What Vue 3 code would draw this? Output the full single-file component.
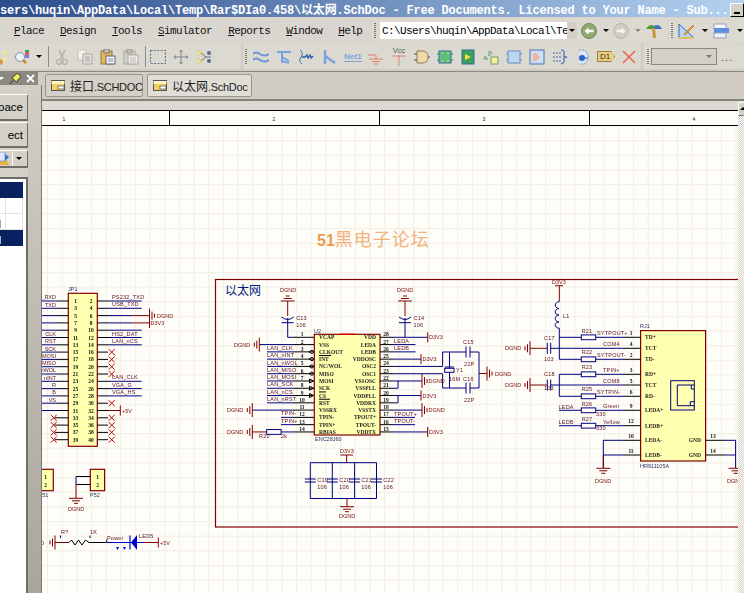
<script setup>
const NAVY = '#00007f', RED = '#800000', BLK = '#000000', BLUE = '#0000d8'
const segs = [], labels = [], boxes = [], res = [], nums = []
const seg = (d, c = NAVY) => segs.push({ d, c })
const txt = (x, y, s, k = 'net') => labels.push({ x, y, s, k })
const gnd = (x, y, dir) => {
  if (dir === 'l') seg(`M${x} ${y - 7}V${y + 7}M${x - 2.5} ${y - 4}V${y + 4}M${x - 5} ${y - 2}V${y + 2}`, RED)
  if (dir === 'r') seg(`M${x} ${y - 7}V${y + 7}M${x + 2.5} ${y - 4}V${y + 4}M${x + 5} ${y - 2}V${y + 2}`, RED)
  if (dir === 'd') seg(`M${x - 7} ${y}H${x + 7}M${x - 4} ${y + 2.5}H${x + 4}M${x - 2} ${y + 5}H${x + 2}`, RED)
  if (dir === 'u') seg(`M${x - 7} ${y}H${x + 7}M${x - 4} ${y - 2.5}H${x + 4}M${x - 2} ${y - 5}H${x + 2}`, RED)
}
const cross = (x, y) => seg(`M${x - 3} ${y - 3}L${x + 3} ${y + 3}M${x - 3} ${y + 3}L${x + 3} ${y - 3}`, '#c00000')
const resistor = (x, y, w = 14.4) => res.push({ x, y: y - 2.4, w })

// JP1 header
const jpY = i => 301 + 7.3 * i
const jpLeft = { 0: '_RXD', 1: 'TXD', 5: 'CLK', 6: 'RST', 7: 'SCK', 8: 'MOSI', 9: 'MISO', 10: 'nWOL', 11: 'nINT', 12: 'R', 13: 'B', 14: 'VS' }
const jpRight = { 0: 'PS232_TXD', 1: 'USB_TXD', 5: 'HS2_DAT', 6: 'LAN_nCS', 11: 'LAN_CLK', 12: 'VGA_G', 13: 'VGA_HS' }
for (let i = 0; i < 20; i++) {
  const y = jpY(i)
  nums.push({ x: 75.5, y: y + 2, s: 2 * i + 1 }, { x: 91, y: y + 2, s: 2 * i + 2 })
  if (i < 16) seg(`M36 ${y}H57`)
  else cross(53.7, y)
  seg(`M${i < 16 ? 57 : 55} ${y}H68.3M97.3 ${y}H108`, BLK)
  if (jpLeft[i]) txt(56, y - 1.6, jpLeft[i], 'end')
  const xr = (i >= 7 && i <= 10) || i === 14 || i >= 16
  if (xr) cross(111.7, y)
  else if (i === 15) seg(`M108 ${y}H120.3M120.3 ${y - 5}V${y + 5}`, RED)
  else if (i === 2) { seg(`M108 ${y}H132`); seg(`M132 ${y}H149.5`, RED); gnd(149.5, y, 'r') }
  else if (i === 3) { seg(`M108 ${y}H132`); seg(`M132 ${y}H149.5M149.5 ${y - 5}V${y + 5}`, RED) }
  else seg(`M108 ${y}H141.7`)
  if (jpRight[i]) txt(112, y - 2, jpRight[i])
}
txt(157, jpY(2) + 2, 'DGND', 'pow'); txt(150.5, jpY(3) + 2, 'D3V3', 'pow'); txt(122, jpY(15) + 2, '+5V', 'pow')
txt(68, 291, 'JP1', 'ref')

// U2
const uY = i => 337.3 + 7.28 * i
const uL = ['VCAP', 'VSS', 'CLKOUT', 'INT', 'NC/WOL', 'MISO', 'MOSI', 'SCK', 'CS', 'RST', 'VSSRX', 'TPIN-', 'TPIN+', 'RBIAS']
const uR = ['VDD', 'LEDA', 'LEDB', 'VDDOSC', 'OSC2', 'OSC1', 'VSSOSC', 'VSSPLL', 'VDDPLL', 'VDDRX', 'VSSTX', 'TPOUT+', 'TPOUT-', 'VDDTX']
const uNet = ['LAN_CLK', 'LAN_nINT', 'LAN_nWOL', 'LAN_MISO', 'LAN_MOSI', 'LAN_SCK', 'LAN_nCS', 'LAN_nRST']
uL.forEach((n, i) => {
  const y = uY(i)
  txt(319, y + 2, n, 'pin')
  txt(376, y + 2, uR[i], 'pinEnd')
  txt(302, y - 1, String(i + 1), 'num')
  txt(386, y - 1, String(28 - i), 'num')
  seg(`M293 ${y}H314M380 ${y}H393`, BLK)
  if (i >= 2 && i <= 9) { seg(`M267 ${y}H293`); txt(267, y - 1.8, uNet[i - 2]) }
  if (i >= 2 && i <= 5) seg(`M309 ${y}L312 ${y - 1.8}L314 ${y}L312 ${y + 1.8}Z`, BLK)
  if (i >= 6 && i <= 8) seg(`M309.5 ${y - 2}L313.5 ${y}L309.5 ${y + 2}Z`, BLK)
})
seg(`M319 ${uY(3) - 3.6}H331M319 ${uY(8) - 3.6}H326M319 ${uY(9) - 3.6}H330`, BLK)
txt(314, 333, 'U2', 'ref'); txt(315, 441, 'ENC28J60', 'ref')
seg(`M287.7 323V${uY(0)}H293`)
seg(`M287.7 301V316M405 301V316`, RED)
gnd(287.7, 301, 'u'); gnd(405, 301, 'u')
txt(280, 292, 'DGND', 'pow'); txt(397, 292, 'DGND', 'pow')
;[287.7, 405].forEach((x, i) => {
  seg(`M${x - 6} 317Q${x} 322 ${x + 6} 317M${x - 6} 322.7H${x + 6}M${x} 318V323`)
  txt(x + 8.5, 320, i ? 'C14' : 'C13'); txt(x + 8.5, 327, '106')
})
seg(`M393 ${uY(0)}H427.7M405 323V${uY(0)}`)
seg(`M427.7 ${uY(0) - 5}V${uY(0) + 5}`, RED)
txt(429, uY(0) + 2, 'D3V3', 'pow')
seg(`M259.3 ${uY(1)}H293`); gnd(259.3, uY(1), 'l'); txt(234, uY(1) + 2, 'DGND', 'pow')
seg(`M252.3 ${uY(10)}H293`); gnd(252.3, uY(10), 'l'); txt(227, uY(10) + 2, 'DGND', 'pow')
seg(`M252.3 ${uY(13)}H266.7`, RED); gnd(252.3, uY(13), 'l'); txt(227, uY(13) + 2, 'DGND', 'pow')
resistor(266.7, uY(13)); seg(`M281 ${uY(13)}H293`)
txt(259, 438, 'R20'); txt(281, 438, '2k')
seg(`M281 ${uY(11)}H293M281 ${uY(12)}H293`); txt(281, 415, 'TPIN-'); txt(281, 422.5, 'TPIN+')
seg(`M393 ${uY(1)}H415.5M393 ${uY(2)}H415.5`); txt(394, uY(1) - 1.5, 'LEDA'); txt(394, uY(2) - 1.5, 'LEDB')
seg(`M393 ${uY(3)}H421`); seg(`M421 ${uY(3) - 5}V${uY(3) + 5}`, RED); txt(422.5, uY(3) + 2, 'D3V3', 'pow')
seg(`M393 ${uY(4)}H442.6V352H466M393 ${uY(5)}H442.6V388H466`)
seg(`M393 ${uY(6)}H422M393 ${uY(7)}H398V${uY(6)}`); gnd(422, uY(6), 'r'); txt(428.5, uY(6) + 2, 'DGND', 'pow')
seg(`M393 ${uY(8)}H421M393 ${uY(9)}H398V${uY(8)}`); seg(`M421 ${uY(8) - 5}V${uY(8) + 5}`, RED); txt(422.5, uY(8) + 2, 'D3V3', 'pow')
seg(`M393 ${uY(10)}H422`); gnd(422, uY(10), 'r'); txt(428.5, uY(10) + 2, 'DGND', 'pow')
seg(`M393 ${uY(11)}H415M393 ${uY(12)}H415`); txt(394, uY(11) - 1.5, 'TPOUT+'); txt(394, uY(12) - 1.5, 'TPOUT-')
seg(`M393 ${uY(13)}H427.7`); seg(`M427.7 ${uY(13) - 5}V${uY(13) + 5}`, RED); txt(429, uY(13) + 2, 'D3V3', 'pow')

// crystal
seg('M466 346.5V357.5M470 346.5V357.5M470 352H479V388H470M466 382.5V393.5M470 382.5V393.5M449.5 352V388M444.7 367H454')
seg('M479 373.5H487', RED); gnd(487, 373.5, 'r'); txt(495, 375.5, 'DGND', 'pow')
txt(463, 344, 'C15'); txt(464, 366, '22P'); txt(463, 381, 'C16'); txt(464, 402, '22P'); txt(456, 371.5, 'Y1'); txt(449, 380.5, '16M')

// RJ1 side
txt(552, 284, 'D3V3', 'pow')
seg('M555 285.7H563M559.3 286V301.7', RED)
seg('M559.3 301.7C554 302 554 308 559 308.5C554 309 554 315 559 315C554 315.5 554 321.5 559 322C554 322 554 328 559.3 328.3V359.3H581M559.3 337.3H581M559.3 374.3V396.3H581M559.3 374.3H581')
txt(563, 317.5, 'L1')
const rows = [
  { y: 337.3, r: 'R21', ry: 332.5, n: 'SYTPOUT+', nx: 597, pin: '1', name: 'TD+' },
  { y: 348.3, c: 1, n: 'COM4', nx: 603, pin: '4', name: 'TCT' },
  { y: 359.3, r: 'R22', ry: 353.5, n: 'SYTPOUT-', nx: 597, pin: '2', name: 'TD-' },
  { y: 374.3, r: 'R23', ry: 369, n: 'TPIN+', nx: 603, pin: '3', name: 'RD+' },
  { y: 385, c: 1, n: 'COM8', nx: 603, pin: '5', name: 'TCT' },
  { y: 396.3, r: 'R25', ry: 391, n: 'SYTPIN-', nx: 597, pin: '6', name: 'RD-' },
  { y: 410.3, r: 'R26', ry: 405.5, n: 'Green', nx: 603, pin: '9', name: 'LEDA+' },
  { y: 425.7, r: 'R27', ry: 420.5, n: 'Yellow', nx: 603, pin: '12', name: 'LEDB+' },
  { y: 440.3, pin: '10', name: 'LEDA-' },
  { y: 455, pin: '11', name: 'LEDB-' }
]
rows.forEach(o => {
  seg(`M623 ${o.y}H640.6`, BLK)
  txt(645, o.y + 2, o.name, 'pin')
  txt(631, o.y - 2.5, o.pin, 'num')
  if (o.r) { resistor(581.3, o.y); seg(`M595.7 ${o.y}H623`); txt(581.7, o.ry, o.r) }
  if (o.c) {
    seg(`M550.7 ${o.y}H623M547.3 ${o.y - 5.5}V${o.y + 5.5}M550.7 ${o.y - 5.5}V${o.y + 5.5}`)
    seg(`M530 ${o.y}H547`, RED); gnd(530, o.y, 'l'); txt(505, o.y + 2, 'DGND', 'pow')
  }
  if (o.n) txt(o.nx, o.y - 2, o.n)
  if (!o.r && !o.c) seg(`M603.3 ${o.y}H623`)
})
txt(544, 340, 'C17'); txt(544, 361, '103'); txt(544, 376, 'C18'); txt(544, 390, '103')
seg('M559 410.3H581M559 425.7H581'); txt(558.5, 408.5, 'LEDA'); txt(558.5, 423.5, 'LEDB')
txt(596, 416, '330'); txt(596, 430, '330')
seg('M603.3 440.3V468')
seg('M603.3 455V468', RED); gnd(603.3, 468.3, 'd'); txt(595, 483, 'DGND', 'pow')
seg('M705.6 440.3H725M705.6 455H725', BLK)
seg('M725 440.3H735.6V468M725 455H735.6')
gnd(735.6, 468.3, 'd'); txt(727, 483, 'DGND', 'pow')
txt(713, 438, '13', 'num'); txt(713, 453, '14', 'num')
txt(701, 442.3, 'GND', 'pinEnd'); txt(701, 457, 'GND', 'pinEnd')
txt(640, 328, 'RJ1', 'ref'); txt(640, 467.5, 'HR911105A', 'ref')

// capacitor bank
seg('M310.3 462.7H376.5V498.5H310.3ZM332.3 462.7V498.5M354.6 462.7V498.5')
;[[310.3, 'C19', 317.3], [332.3, 'C20', 339.3], [354.6, 'C21', 361.3], [376.5, 'C22', 383.3]].forEach(([x, n, tx]) => {
  seg(`M${x - 5.5} 479H${x + 5.5}M${x - 5.5} 482H${x + 5.5}`)
  txt(tx, 481.5, n); txt(tx, 489, '106')
})
txt(340, 452.5, 'D3V3', 'pow')
seg('M340.5 455H353M346.7 455V462.7M347 498.5V506.7', RED)
gnd(347, 506.7, 'd'); txt(339, 518, 'DGND', 'pow')

// P51 / P52
seg('M76 476.5H90.3M76 484.5H90.3', BLK)
seg('M76 476.5V484.5', NAVY)
seg('M76 484.5V498', RED); gnd(76, 498.3, 'd'); txt(68, 511, 'DGND', 'pow')
boxes.push({ x: 36, y: 469.3, w: 17.3, h: 21.4 }, { x: 90.3, y: 469.3, w: 14.3, h: 21.4 })
nums.push({ x: 45.5, y: 479, s: 1 }, { x: 45.5, y: 486.5, s: 2 }, { x: 97.5, y: 479, s: 1 }, { x: 97.5, y: 486.5, s: 2 })
txt(38.5, 497, 'P51', 'ref'); txt(90, 497, 'P52', 'ref')

// power LED row
seg('M55 542.5H69', RED); gnd(55, 542.5, 'l'); txt(28, 544.5, 'DGND', 'pow')
seg('M69 542.5l2.5 -2.5 3.5 5 3.5 -5 3.5 5 3.5 -5 3.5 2.5H106.7', BLK)
seg('M60.5 535.5V538M90 535.5V538M106.7 539.5V542.5')
seg('M106.7 542.5H143', BLUE)
seg('M143 542.5H158.3M158.3 537.5V547.5', RED)
txt(61, 533.5, 'R?'); txt(90, 533.5, '1K'); txt(107, 540, 'Power'); txt(139, 537.5, 'LED5'); txt(160, 544.5, '+5V', 'pow')
const gridLines = [169.5, 379.5, 589.5]
const rulerNums = [[64, 1], [274, 2], [484, 3], [694, 4]]
</script>

<template>
  <div class="win">
    <header class="title">
      <span class="title-text">sers\huqin\AppData\Local\Temp\Rar$DIa0.458\以太网.SchDoc - Free Documents. Licensed to Your Name - Sub...</span>
      <button class="min"></button>
    </header>

    <div class="menubar">
      <nav class="menus">
        <span><u>P</u>lace</span><span><u>D</u>esign</span><span><u>T</u>ools</span><span><u>S</u>imulator</span><span><u>R</u>eports</span><span><u>W</u>indow</span><span><u>H</u>elp</span>
      </nav>
      <div class="grp g-path">
        <i class="grip"></i>
        <div class="pathbox"><span class="pathtext">C:\Users\huqin\AppData\Local\Te</span><b class="drop"><i class="caret"></i></b></div>
        <svg class="round" viewBox="0 0 16 16"><circle cx="8" cy="8" r="7.5" fill="#8eaa72" stroke="#6f8c58"/><path d="M3.5 8l4-3.6v2.3h5v2.6h-5v2.3z" fill="#fff"/></svg>
        <i class="caret c1"></i>
        <svg class="round" viewBox="0 0 16 16"><circle cx="8" cy="8" r="7.5" fill="#cfccc6" stroke="#b9b6b0"/><path d="M12.5 8l-4-3.6v2.3h-5v2.6h5v2.3z" fill="#f4f3f0"/></svg>
        <i class="caret c2"></i>
        <svg class="tree" viewBox="0 0 18 16"><path d="M1 6Q5 0 9 3L9 6Z" fill="#4f9a3c"/><path d="M9 3Q14 0 17 6L9 6Z" fill="#3a72c4"/><path d="M7 5h3l1 10H8z" fill="#c8963c"/></svg>
      </div>
      <div class="grp g-tools">
        <i class="grip"></i>
        <svg class="ic wide" viewBox="0 0 17 16"><path d="M1 1v14h15z" fill="#b8d4f0" stroke="#3a6bb0"/><path d="M1 14h15v2H1z" fill="#e0c060"/><path d="M7 10l8-8 1 1-8 8-2 1z" fill="#e6a030" stroke="#a06010" stroke-width=".5"/></svg>
        <i class="caret c3"></i>
        <svg class="ic wide" viewBox="0 0 17 16"><rect x="1" y="1" width="12" height="5" fill="#f4f6fb" stroke="#8fa0b8"/><rect x="1" y="5" width="15" height="5" fill="#5f8ede"/><rect x="1" y="10" width="12" height="5" fill="#eef0f6" stroke="#8fa0b8"/></svg>
        <i class="caret c4"></i>
      </div>
    </div>

    <div class="toolbar">
      <div class="grp g1">
        <svg class="part" viewBox="0 0 10 16"><circle cx="5" cy="4" r="2" fill="#f3e88a"/><circle cx="5" cy="10" r="2" fill="#f3e88a"/><circle cx="0" cy="13" r="3" fill="#d89a4a"/></svg>
        <svg class="ic s1" viewBox="0 0 16 16"><circle cx="6" cy="8" r="4.5" fill="#e8f0f8" stroke="#7f93a8"/><path d="M9 11l3 3" stroke="#c88a3a" stroke-width="2.5"/><path d="M11 1h4v2h-4z" fill="#4aa04a"/><path d="M11 3h4v3h-4z" fill="#d86060"/><path d="M11 6h4v3h-4z" fill="#7a7ae0"/></svg>
        <i class="caret c5"></i>
        <i class="sep s2"></i>
        <span class="slot s3"><svg class="ic" viewBox="0 0 16 16"><path d="M5 1l5 10M11 1L6 11" stroke="#b3b1ac" stroke-width="1.6" fill="none"/><circle cx="5" cy="13" r="2.4" fill="none" stroke="#b3b1ac" stroke-width="1.4"/><circle cx="11" cy="13" r="2.4" fill="none" stroke="#b3b1ac" stroke-width="1.4"/></svg></span>
        <span class="slot"><svg class="ic" viewBox="0 0 16 16"><rect x="1" y="1" width="8" height="10" fill="#f2f1ee" stroke="#c4c2bd"/><rect x="6" y="5" width="9" height="10" fill="#e3e1dc" stroke="#a8a6a1"/><path d="M8 8h5M8 10h5M8 12h5" stroke="#a8a6a1"/></svg></span>
        <span class="slot"><svg class="ic" viewBox="0 0 16 16"><rect x="1" y="2" width="11" height="13" fill="#e3b65c" stroke="#8f7a3f"/><rect x="4" y="0" width="5" height="4" fill="#c9c7c2" stroke="#777"/><rect x="6" y="7" width="9" height="8" fill="#eef0f4" stroke="#667"/><path d="M8 10h5M8 12h5" stroke="#8899aa"/></svg></span>
        <span class="slot"><svg class="ic" viewBox="0 0 16 16"><rect x="1" y="2" width="11" height="13" fill="#d0cec8" stroke="#aaa8a2"/><rect x="4" y="0" width="5" height="4" fill="#bfbdb8" stroke="#999"/><rect x="5" y="6" width="10" height="9" fill="#eeece8" stroke="#aaa8a2"/><path d="M7 9h6M7 11h6M7 13h6" stroke="#bbb"/></svg></span>
        <i class="sep s4"></i>
        <span class="slot s5"><svg class="ic" viewBox="0 0 16 16"><rect x=".5" y="1.5" width="15" height="13" fill="none" stroke="#5d7290" stroke-width="1.2" stroke-dasharray="2 1.4"/></svg></span>
        <span class="slot"><svg class="ic" viewBox="0 0 16 16"><path d="M8 1v14M1 8h14M6.5 3L8 1l1.500 2M6.500 13L8 15l1.500-2M3 6.500L1 8l2 1.500M13 6.500L15 8l-2 1.500" stroke="#7d8590" fill="none"/></svg></span>
        <span class="slot"><svg class="ic" viewBox="0 0 16 16"><path d="M5 4l5 4-5 4M10 8h5" stroke="#6c7480" fill="none"/><circle cx="3" cy="4" r="2.200" fill="#f0e68c" stroke="#c8b860" stroke-width=".5"/><circle cx="3" cy="12" r="2.200" fill="#f0e68c" stroke="#c8b860" stroke-width=".5"/><circle cx="13" cy="4" r="2" fill="#5d6c88"/><circle cx="13" cy="12" r="2" fill="#5d6c88"/></svg></span>
      </div>

      <div class="grp g2">
        <i class="grip"></i>
        <span class="slot"><svg class="ic" viewBox="0 0 16 16"><path d="M0 5q3-3 7 0t9 0M0 11q3-3 7 0t9 0" stroke="#6a96d8" stroke-width="2" fill="none"/></svg></span>
        <span class="slot"><svg class="ic" viewBox="0 0 16 16"><path d="M1 3h14M6 3v11M6 8l7 4M6 12l7 2" stroke="#7aa2dc" stroke-width="2" fill="none"/></svg></span>
        <span class="slot"><svg class="ic" viewBox="0 0 16 16"><path d="M1 1q4 3 1 7t1 7" stroke="#3a6fc0" fill="none"/><path d="M3 8h3l2-2 1 3 2-3 1 3 2-2" stroke="#2a5ab0" stroke-width="1.300" fill="none"/></svg></span>
        <span class="slot"><svg class="ic" viewBox="0 0 16 16"><path d="M3 1v14M3 7l10 7" stroke="#7aa2dc" stroke-width="2.400" fill="none"/></svg></span>
        <span class="slot"><span class="neticon">Net1</span></span>
        <span class="slot"><svg class="ic" viewBox="0 0 16 16"><path d="M0 6h8v4M1 10h14M4 12.500h8M6 15h4" stroke="#e08070" fill="none"/></svg></span>
        <span class="slot"><svg class="ic tall" viewBox="0 0 16 20"><path d="M1 9h14M8 9v10" stroke="#e08070" fill="none"/><text x="8" y="6" class="vcc">Vcc</text></svg></span>
        <span class="slot"><svg class="ic" viewBox="0 0 16 16"><path d="M3 2h5q6 0 6 6t-6 6H3z" fill="#f2d9a8" stroke="#8a7a5a"/><path d="M0 5h3M0 11h3M14 8h2" stroke="#555"/></svg></span>
        <span class="slot"><svg class="ic" viewBox="0 0 16 16"><rect x="2" y="2" width="12" height="12" fill="#5cc07c" stroke="#3a6aa0"/><path d="M4 4h2M10 4h2M4 12h2M10 12h2" stroke="#f0e060"/><path d="M0 5h2M0 11h2M14 5h2M14 11h2" stroke="#3a6aa0"/></svg></span>
        <span class="slot"><svg class="ic" viewBox="0 0 16 16"><rect x="2" y="1" width="12" height="14" fill="#3aa060" stroke="#3a6aa0"/><path d="M5 5l6 3-6 3z" fill="#f6e040"/></svg></span>
        <span class="slot"><svg class="ic" viewBox="0 0 16 16"><path d="M6 2l3 2-3 3zM2 7l3 3H1zM9 9h5v5H9z" fill="#cfe4c0" stroke="#6aa070"/><rect x="8" y="8" width="7" height="7" fill="#f4f09a" stroke="#6aa070"/></svg></span>
        <span class="slot"><svg class="ic" viewBox="0 0 16 16"><rect x="2" y="2" width="12" height="12" fill="#b8d8f2" stroke="#6a8ac0"/><path d="M0 5h2M0 11h2M14 5h2M14 11h2" stroke="#6a8ac0"/></svg></span>
        <span class="slot"><svg class="ic" viewBox="0 0 16 16"><rect x="1" y="1" width="14" height="14" fill="#cfdff2" stroke="#4a72b0"/><path d="M4 4h3l4 4-4 4H4z" fill="#f4b0a0"/></svg></span>
        <span class="slot"><svg class="ic" viewBox="0 0 16 16"><path d="M9 1q4 0 3 4t3 3q-4 0-3 3t-3 4" stroke="#3a6ab8" stroke-width="1.200" fill="none"/><path d="M1 4h8M1 8h8M1 12h8" stroke="#3a6ab8" stroke-dasharray="2 1"/></svg></span>
        <span class="slot"><svg class="ic" viewBox="0 0 16 16"><path d="M4 1h6l4 7-4 7H4" fill="#dbe7f6" stroke="#7a9ad0" stroke-dasharray="2 1"/><circle cx="7" cy="9" r="3" fill="#2a62c8"/><path d="M10 9h3" stroke="#2a62c8"/></svg></span>
        <span class="slot"><span class="d1">D1</span></span>
        <span class="slot"><svg class="ic" viewBox="0 0 16 16"><path d="M2 2l12 12M14 2L2 14" stroke="#e8674c" stroke-width="1.500"/></svg></span>
      </div>

      <div class="grp g3">
        <i class="grip"></i>
        <div class="combo"><i class="caret c6"></i></div>
        <span class="ell">...</span>
      </div>
    </div>

    <div class="body">
      <aside class="side">
        <div class="phead">
          <i class="caret c7"></i>
          <svg class="pinic" viewBox="0 0 12 12"><path d="M8 0l4 4-3 3-2 3-5-5 3-2z" fill="#f3ef5c" stroke="#222"/><path d="M3 8L0 12" stroke="#222"/></svg>
          <svg class="close" viewBox="0 0 9 9"><path d="M1 1l7 7M8 1L1 8" stroke="#fff" stroke-width="1.800"/></svg>
        </div>
        <div class="siderow">
          <div class="panel">
            <button class="pbtn b1">pace</button>
            <button class="pbtn b2">ect</button>
            <button class="pbtn b3">
              <svg class="fileic" viewBox="0 0 13 14"><path d="M0 8h11l2 5H0z" fill="#e8b040"/><rect x="1" y="0" width="8" height="9" fill="#dfe8f8" stroke="#8aa4cc"/><path d="M9 2l4 3-4 4z" fill="#2f70d8"/></svg>
              <i class="bsep"></i><i class="caret c8"></i>
            </button>
            <div class="listbox">
              <div class="navy"></div>
              <div class="cells"><i></i><i></i></div>
              <div class="cells"><i><b class="mark"></b></i><i></i></div>
              <div class="navy"><b class="mark m2"></b></div>
            </div>
          </div>
          <div class="gutter"></div>
        </div>
      </aside>

      <main class="work">
        <div class="tabs">
          <div class="tab">
            <svg class="docic" viewBox="0 0 14 11"><rect x=".5" y=".5" width="13" height="10" fill="#f2d060" stroke="#555"/><path d="M.5 1h13v3H.5z" fill="#fbf3c0"/><rect x="7" y="6" width="6" height="3" fill="#fff" stroke="#555" stroke-width=".7"/></svg>
            <span class="tabt"><span class="cj">接口</span>.SCHDOC</span>
          </div>
          <div class="tab on">
            <svg class="docic" viewBox="0 0 14 11"><rect x=".5" y=".5" width="13" height="10" fill="#f2d060" stroke="#555"/><path d="M.5 1h13v3H.5z" fill="#fbf3c0"/><rect x="7" y="6" width="6" height="3" fill="#fff" stroke="#555" stroke-width=".7"/></svg>
            <span class="tabt"><span class="cj">以太网</span>.SchDoc</span>
          </div>
        </div>
        <div class="band"></div>
        <div class="sheetrow">
          <svg class="sheet" viewBox="42 110 696 483" preserveAspectRatio="xMinYMin slice">
            <defs>
              <pattern id="grid" x="47" y="125.400" width="14.650" height="14.650" patternUnits="userSpaceOnUse">
                <path d="M0 0V14.650M0 0H14.650" stroke="#f2efe8" stroke-width="2.400" fill="none"/>
              </pattern>
            </defs>
            <rect x="42" y="110" width="696" height="483" fill="#fffdf8"/>
            <rect x="42" y="126" width="696" height="467" fill="url(#grid)"/>
            <path d="M42 110.500H738M42 125.500H738" stroke="#000"/>
            <path v-for="x in gridLines" :key="x" :d="`M${x} 110V125`" stroke="#000"/>
            <text v-for="[x, n] in rulerNums" :key="n" :x="x" y="120.500" class="ruler">{{ n }}</text>

            <rect x="215.500" y="279.500" width="540" height="247.500" fill="none" stroke="#800000" stroke-width="1.200"/>
            <text x="225" y="295" class="big">以太网</text>
            <text x="317" y="246" class="logo"><tspan class="logo51">51</tspan>黑电子论坛</text>

            <rect x="68.300" y="293.300" width="29" height="153" class="part-box"/>
            <rect x="314.300" y="334.300" width="65.700" height="100.700" class="part-box"/>
            <rect x="640.600" y="330.600" width="65" height="130.400" class="part-box"/>
            <rect v-for="(b, i) in boxes" :key="i" :x="b.x" :y="b.y" :width="b.w" :height="b.h" class="part-box"/>
            <path d="M340 334.300H355" stroke="#e00000" stroke-width="1.400"/>

            <rect x="670.700" y="380.700" width="23.600" height="29.300" fill="none" stroke="#00007f"/>
            <path d="M694.300 385H677.300V405.700H694.300M691.300 385V389H694.300M690.300 405.700V401.700H694.300" fill="none" stroke="#00007f"/>

            <path v-for="(s, i) in segs" :key="i" :d="s.d" :stroke="s.c" fill="none" stroke-width="1"/>
            <rect v-for="(r, i) in res" :key="'r' + i" :x="r.x" :y="r.y" :width="r.w" height="4.800" fill="#fffdf8" stroke="#00007f"/>
            <rect x="444.700" y="368.300" width="9.300" height="4" fill="#fffdf8" stroke="#00007f"/>
            <path d="M131 542.500L137 535V550Z" fill="#0000d8"/>
            <path d="M130 535.500V549.500" stroke="#0000d8" stroke-width="1.200"/>
            <path d="M116 547l3 0-1.500 3zM123 547l3 0-1.500 3z" fill="#0000d8"/>

            <g class="soft">
              <text v-for="(n, i) in nums" :key="'n' + i" :x="n.x" :y="n.y" class="t num">{{ n.s }}</text>
              <text v-for="(l, i) in labels" :key="'l' + i" :x="l.x" :y="l.y" :class="['t', l.k]">{{ l.s }}</text>
            </g>
          </svg>
          <div class="vscroll"><button class="sbtn"><i class="up"></i></button></div>
        </div>
      </main>
    </div>
  </div>
</template>

<style>
html, body { margin: 0; background: #d4d0c8; }
</style>

<style scoped>
.win { width: 744px; height: 593px; display: flex; flex-direction: column; overflow: hidden; background: #d4d0c8; font-family: "Liberation Sans", "Noto Sans CJK SC", sans-serif; }
.title { flex: none; height: 17px; display: flex; align-items: center; background: linear-gradient(90deg, #2c4c8c, #b4d2f0); }
.title-text { flex: 1; min-width: 0; white-space: nowrap; overflow: hidden; color: #fff; font: bold 12px "Liberation Mono", "Noto Sans CJK SC", monospace; letter-spacing: -.2px; }
.min { flex: none; width: 14px; height: 14px; padding: 0; margin-top: 3px; background: #d4d0c8; border: 1px solid; border-color: #fff #000 #000 #fff; position: relative; }
.min::after { content: ""; position: absolute; left: 3px; bottom: 2px; width: 6px; height: 2px; background: #000; }

.menubar { flex: none; height: 27px; display: flex; align-items: center; background: #d9d6cf; }
.menus { display: flex; gap: 16px; padding-left: 14px; font: 11px "Liberation Mono", monospace; letter-spacing: -.6px; color: #111; }
.grp { background: #dcd9d1; border-radius: 3px; display: flex; align-items: center; }
.g-path { margin-left: auto; width: 295px; height: 23px; }
.g-tools { margin-left: 2px; width: 75px; height: 23px; }
.grip { flex: none; width: 2px; height: 15px; margin-left: 2px; background: repeating-linear-gradient(#777 0 1px, transparent 1px 2px); }
.pathbox { width: 197px; height: 17px; margin-left: 4px; background: #fff; display: flex; align-items: center; justify-content: space-between; }
.pathtext { font: 11px "Liberation Mono", monospace; letter-spacing: -.6px; color: #000; padding-left: 2px; white-space: nowrap; overflow: hidden; }
.drop { width: 10px; height: 17px; background: #d4d0c8; display: flex; align-items: center; justify-content: center; }
.caret { display: block; width: 0; height: 0; flex: none; border: 3px solid transparent; border-top: 3px solid #000; border-bottom: 0; }
.round { width: 16px; height: 16px; flex: none; margin-left: 4px; }
.c1 { margin-left: 6px; }
.round + .c2 { margin-left: 6px; border-top-color: #888; }
.tree { width: 18px; height: 16px; flex: none; margin-left: 4px; }
.ic { width: 16px; height: 16px; flex: none; display: block; }
.wide { width: 17px; margin-left: 5px; }
.c3 { margin-left: 7px; }
.c4 { margin-left: 7px; }

.toolbar { flex: none; height: 28px; box-sizing: border-box; display: flex; align-items: stretch; gap: 2px; padding-bottom: 2px; background: #cfcbc3; border-bottom: 1px solid #8a8780; }
.g1 { width: 241px; }
.g2 { width: 398px; }
.g3 { flex: 1; }
.g2 .grip { margin-left: 2px; margin-right: 2.500px; }
.part { width: 10px; height: 16px; flex: none; }
.s1 { margin-left: 4px; }
.c5 { margin-left: 6px; }
.sep { flex: none; width: 1px; height: 21px; background: #8e8b85; }
.s2 { margin-left: 6px; }
.s3 { margin-left: 1px; }
.s4 { margin-left: 3px; }
.s5 { margin-left: .5px; }
.slot { flex: none; width: 23px; height: 20px; display: flex; align-items: center; justify-content: center; }
.tall { height: 20px; }
.vcc { font: 7.500px "Liberation Sans", sans-serif; fill: #555; text-anchor: middle; }
.neticon { font: bold 8px "Liberation Sans", sans-serif; color: #7aa2dc; border-bottom: 1px solid #7aa2dc; }
.d1 { font: 8px "Liberation Sans", sans-serif; color: #333; background: #e8cc80; border: 1px solid #9a8040; padding: 0 4px 0 2px; clip-path: polygon(0 0, 80% 0, 100% 50%, 80% 100%, 0 100%); }
.g3 .grip { margin-left: 4px; }
.combo { width: 66px; height: 17px; box-sizing: border-box; margin-left: 2px; background: #d4d0c8; border: 1px solid #8a8780; display: flex; align-items: center; justify-content: flex-end; padding-right: 4px; }
.c6 { border-top-color: #777; }
.ell { margin-left: 4px; color: #555; font: 11px "Liberation Sans", sans-serif; letter-spacing: 1px; }

.body { flex: 1; min-height: 0; display: flex; }
.side { flex: none; width: 42px; display: flex; flex-direction: column; background: #d2cec6; }
.phead { flex: none; height: 13px; width: 38px; background: #8b8882; display: flex; align-items: center; }
.c7 { border-top-color: #fff; margin-left: -2px; }
.pinic { width: 11px; height: 11px; margin-left: 6px; flex: none; }
.close { width: 9px; height: 9px; margin-left: 5px; flex: none; }
.siderow { flex: 1; min-height: 0; display: flex; }
.panel { width: 28px; flex: none; display: flex; flex-direction: column; background: #d4d0c8; overflow: hidden; }
.gutter { flex: 1; box-sizing: border-box; border-right: 1px solid #777; background: linear-gradient(#d2cec6, #aaa69e); }
.pbtn { flex: none; display: flex; align-items: center; justify-content: flex-end; box-sizing: border-box; padding: 0 4px 0 0; background: #d4d0c8; border-style: solid; border-width: 1px 2px 2px 0; border-color: #fff #6f6d68 #6f6d68 #fff; font: 11.500px "Liberation Sans", sans-serif; color: #000; width: 29px; }
.b1 { height: 27px; margin-top: 9px; }
.b2 { height: 26px; margin-top: 1px; }
.b3 { height: 18px; margin-top: 2px; padding-right: 5px; }
.fileic { width: 13px; height: 14px; flex: none; }
.bsep { width: 1px; height: 14px; background: #fff; margin: 0 3px; flex: none; }
.listbox { flex: 1; margin-top: 9px; box-sizing: border-box; background: #fff; border-top: 2px solid #6f6d68; border-right: 2px solid #6f6d68; padding: 3px 3px 0 0; }
.navy { height: 16px; background: #07225e; position: relative; }
.cells { height: 16px; display: flex; }
.cells i { display: block; box-sizing: border-box; border-right: 1px solid #e4e2de; border-bottom: 1px solid #e4e2de; height: 16px; position: relative; }
.cells i:first-child { width: 6px; }
.cells i:last-child { flex: 1; }
.mark { position: absolute; left: 0; top: 6px; width: 1px; height: 8px; background: #a8a6a2; }
.m2 { top: 6px; background: #b4b2ac; }

.work { flex: 1; min-width: 0; display: flex; flex-direction: column; }
.tabs { flex: none; height: 29px; box-sizing: border-box; display: flex; gap: 4px; padding: 2px 0 0 3px; background: #d0ccc4; border-bottom: 2px solid #85827c; }
.tab { width: 98px; height: 23px; box-sizing: border-box; border: 1px solid #98958e; border-radius: 2px; display: flex; align-items: center; padding-left: 5px; background: #d4d0c8; }
.tab.on { width: 105px; background: #e0ddd6; }
.docic { width: 14px; height: 11px; flex: none; }
.tabt { margin-left: 5px; font-size: 11px; color: #222; white-space: nowrap; letter-spacing: -.3px; }
.cj { font-size: 12px; font-family: "Noto Sans CJK SC", sans-serif; letter-spacing: 0; }
.band { flex: none; height: 9px; background: #dcd9d2; }
.sheetrow { flex: 1; min-height: 0; display: flex; }
.sheet { flex: 1; min-width: 0; height: 100%; display: block; }
.vscroll { flex: none; width: 6px; margin-top: -8px; position: relative; background: repeating-conic-gradient(#d4d0c8 0 25%, #fff 0 50%) 0 0 / 2px 2px; }
.sbtn { display: block; width: 6px; height: 14px; padding: 0; background: #d4d0c8; border: 1px solid; border-color: #fff #d4d0c8 #6f6d68 #fff; position: relative; }
.up { position: absolute; left: 1px; top: 4px; width: 0; height: 0; border: 3px solid transparent; border-bottom: 3px solid #000; border-top: 0; }

.part-box { fill: #ffffb0; stroke: #800000; stroke-width: 1.200; }
.ruler { font: 5px "Liberation Sans", sans-serif; fill: #222; text-anchor: middle; }
.big { font: 12px "Noto Sans CJK SC", sans-serif; fill: #00207f; }
.logo { font: 18px "Noto Sans CJK SC", sans-serif; fill: #f4b27c; letter-spacing: 1px; }
.logo51 { font: bold 16px "Liberation Sans", sans-serif; fill: #ee9a4c; letter-spacing: 0; }
.soft { filter: blur(.3px); }
.t { font-family: "Liberation Sans", sans-serif; font-size: 5.500px; fill: #5a1424; }
.net { fill: #5a1424; letter-spacing: .2px; }
.end { text-anchor: end; }
.pow { fill: #7a1010; }
.ref { fill: #28345c; }
.num { fill: #111; text-anchor: middle; font-family: "Liberation Serif", serif; font-weight: bold; }
.pin { fill: #222; font-weight: bold; font-family: "Liberation Serif", serif; }
.pinEnd { fill: #222; text-anchor: end; font-weight: bold; font-family: "Liberation Serif", serif; }
</style>
